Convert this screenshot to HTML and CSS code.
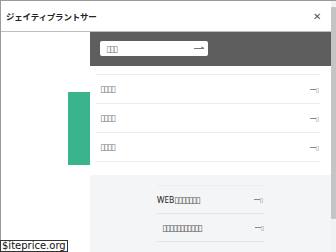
FILE: index.html
```html
<!DOCTYPE html>
<html lang="ja">
<head>
<meta charset="utf-8" />
<meta name="viewport" content="width=device-width" />
<title>ジェイティプラントサービス</title>
<link rel="stylesheet" href="styles.css">
</head>
<body>
<div class="page">
	<div class="main">
		<div class="header">
			<div class="title">ジェイティプラントサー</div>
			<div class="close">&#x2715;</div>
		</div>
		<div class="body">
			<div class="side"><div class="greenBar"></div></div>
			<div class="content">
				<div class="searchPanel">
					<div class="searchBox"><span class="tofu">▯▯▯</span><span class="longArrow"></span></div>
				</div>
				<ul class="menuList">
					<li><span class="tofu">▯▯▯▯</span><span class="arrow"><span class="line"></span><span class="tofu small">▯</span></span></li>
					<li><span class="tofu">▯▯▯▯</span><span class="arrow"><span class="line"></span><span class="tofu small">▯</span></span></li>
					<li><span class="tofu">▯▯▯▯</span><span class="arrow"><span class="line"></span><span class="tofu small">▯</span></span></li>
				</ul>
				<div class="foot">
					<ul class="footList">
						<li><span class="footText">WEB<span class="tofu">▯▯▯▯▯▯▯</span></span><span class="arrow"><span class="line"></span><span class="tofu small">▯</span></span></li>
						<li class="indent"><span class="footText"><span class="tofu">▯▯▯▯▯▯▯▯▯▯▯</span></span><span class="arrow"><span class="line"></span><span class="tofu small">▯</span></span></li>
					</ul>
				</div>
			</div>
		</div>
	</div>
	<div class="scrollbar">
		<div class="sbUp"></div>
		<div class="sbThumb"></div>
		<div class="sbTrack"></div>
		<div class="sbDown"></div>
	</div>
</div>
<div class="watermark">$iteprice.org</div>
</body>
</html>
```
FILE: styles.css
```css
html, body {
	margin: 0;
	padding: 0;
	width: 336px;
	height: 252px;
	overflow: hidden;
}
body {
	font-family: "Noto Sans CJK JP", "Noto Sans", sans-serif;
	color: #333;
	background-color: white;
	position: relative;
}
ul {
	list-style: none;
	margin: 0;
	padding: 0;
}
div.page {
	display: flex;
	height: 252px;
	border-top: 1px solid #9a9a9a;
	border-left: 1px solid #9a9a9a;
	box-sizing: border-box;
}
div.main {
	flex: 1;
	display: flex;
	flex-direction: column;
}
div.header {
	height: 30px;
	display: flex;
	align-items: center;
	justify-content: space-between;
	padding: 0 10px 0 5px;
	border-bottom: 1px solid #bdbdbd;
}
div.title {
	font-size: 8.5px;
	font-weight: bold;
	color: #222;
	letter-spacing: -0.2px;
}
div.close {
	font-family: "DejaVu Sans", sans-serif;
	font-size: 10px;
	font-weight: 300;
	color: #555;
}
div.body {
	flex: 1;
	display: flex;
}
div.side {
	width: 89px;
}
div.greenBar {
	width: 22px;
	height: 73px;
	margin: 60px 0 0 67px;
	background-color: #3ab48c;
}
div.content {
	flex: 1;
	display: flex;
	flex-direction: column;
}
.tofu {
	font-family: "DejaVu Sans", sans-serif;
	font-size: 9px;
	letter-spacing: -1.4px;
	color: #777;
}
.tofu.small {
	font-size: 6px;
	letter-spacing: 0;
}
div.searchPanel {
	height: 34px;
	background-color: #5e5e5e;
	padding: 9px 0 0 10px;
	box-sizing: border-box;
}
div.searchBox {
	width: 108px;
	height: 15px;
	background-color: white;
	border-radius: 2px;
	display: flex;
	align-items: center;
	justify-content: space-between;
	padding: 0 4px 0 6px;
	box-sizing: border-box;
}
span.longArrow {
	width: 10px;
	height: 1px;
	background-color: #777;
	position: relative;
}
span.longArrow::after {
	content: "";
	position: absolute;
	right: 0;
	top: -1px;
	width: 3px;
	height: 1px;
	background-color: #777;
	transform: rotate(25deg);
}
ul.menuList {
	padding: 8px 11px 0 6px;
	height: 101px;
}
ul.menuList li {
	height: 28px;
	border-top: 1px solid #ececec;
	display: flex;
	align-items: center;
	justify-content: space-between;
	padding: 0 1px 0 4px;
}
ul.menuList li:last-child {
	border-bottom: 1px solid #ececec;
}
span.arrow {
	display: flex;
	align-items: center;
	gap: 0;
}
span.arrow span.line {
	width: 6px;
	height: 1px;
	background-color: #888;
}
div.foot {
	flex: 1;
	background-color: #f4f5f7;
	padding-top: 10px;
}
ul.footList {
	width: 107px;
	margin: 0 auto;
	border-top: 1px solid #eceef0;
}
ul.footList li {
	height: 28px;
	border-bottom: 1px solid #e2e4e6;
	display: flex;
	align-items: center;
	justify-content: space-between;
	padding: 0 1px 0 0;
	box-sizing: border-box;
}
ul.footList li.indent {
	padding: 0 0 0 5px;
}
span.footText {
	font-family: "Noto Sans", sans-serif;
	font-size: 8px;
	color: #222;
}
span.footText .tofu {
	color: #555;
}
div.scrollbar {
	width: 5px;
	display: flex;
	flex-direction: column;
	background-color: #f1f1f1;
}
div.sbUp {
	height: 6px;
}
div.sbThumb {
	height: 212px;
	background-color: #c4c4c4;
	border-radius: 1px;
}
div.sbTrack {
	flex: 1;
}
div.sbDown {
	height: 6px;
}
div.watermark {
	position: absolute;
	left: 0;
	bottom: 0;
	font-family: "DejaVu Sans", sans-serif;
	font-size: 10px;
	line-height: 10px;
	color: #111;
	background-color: white;
	border: 1px solid #333;
	padding: 0 1px;
}
```
